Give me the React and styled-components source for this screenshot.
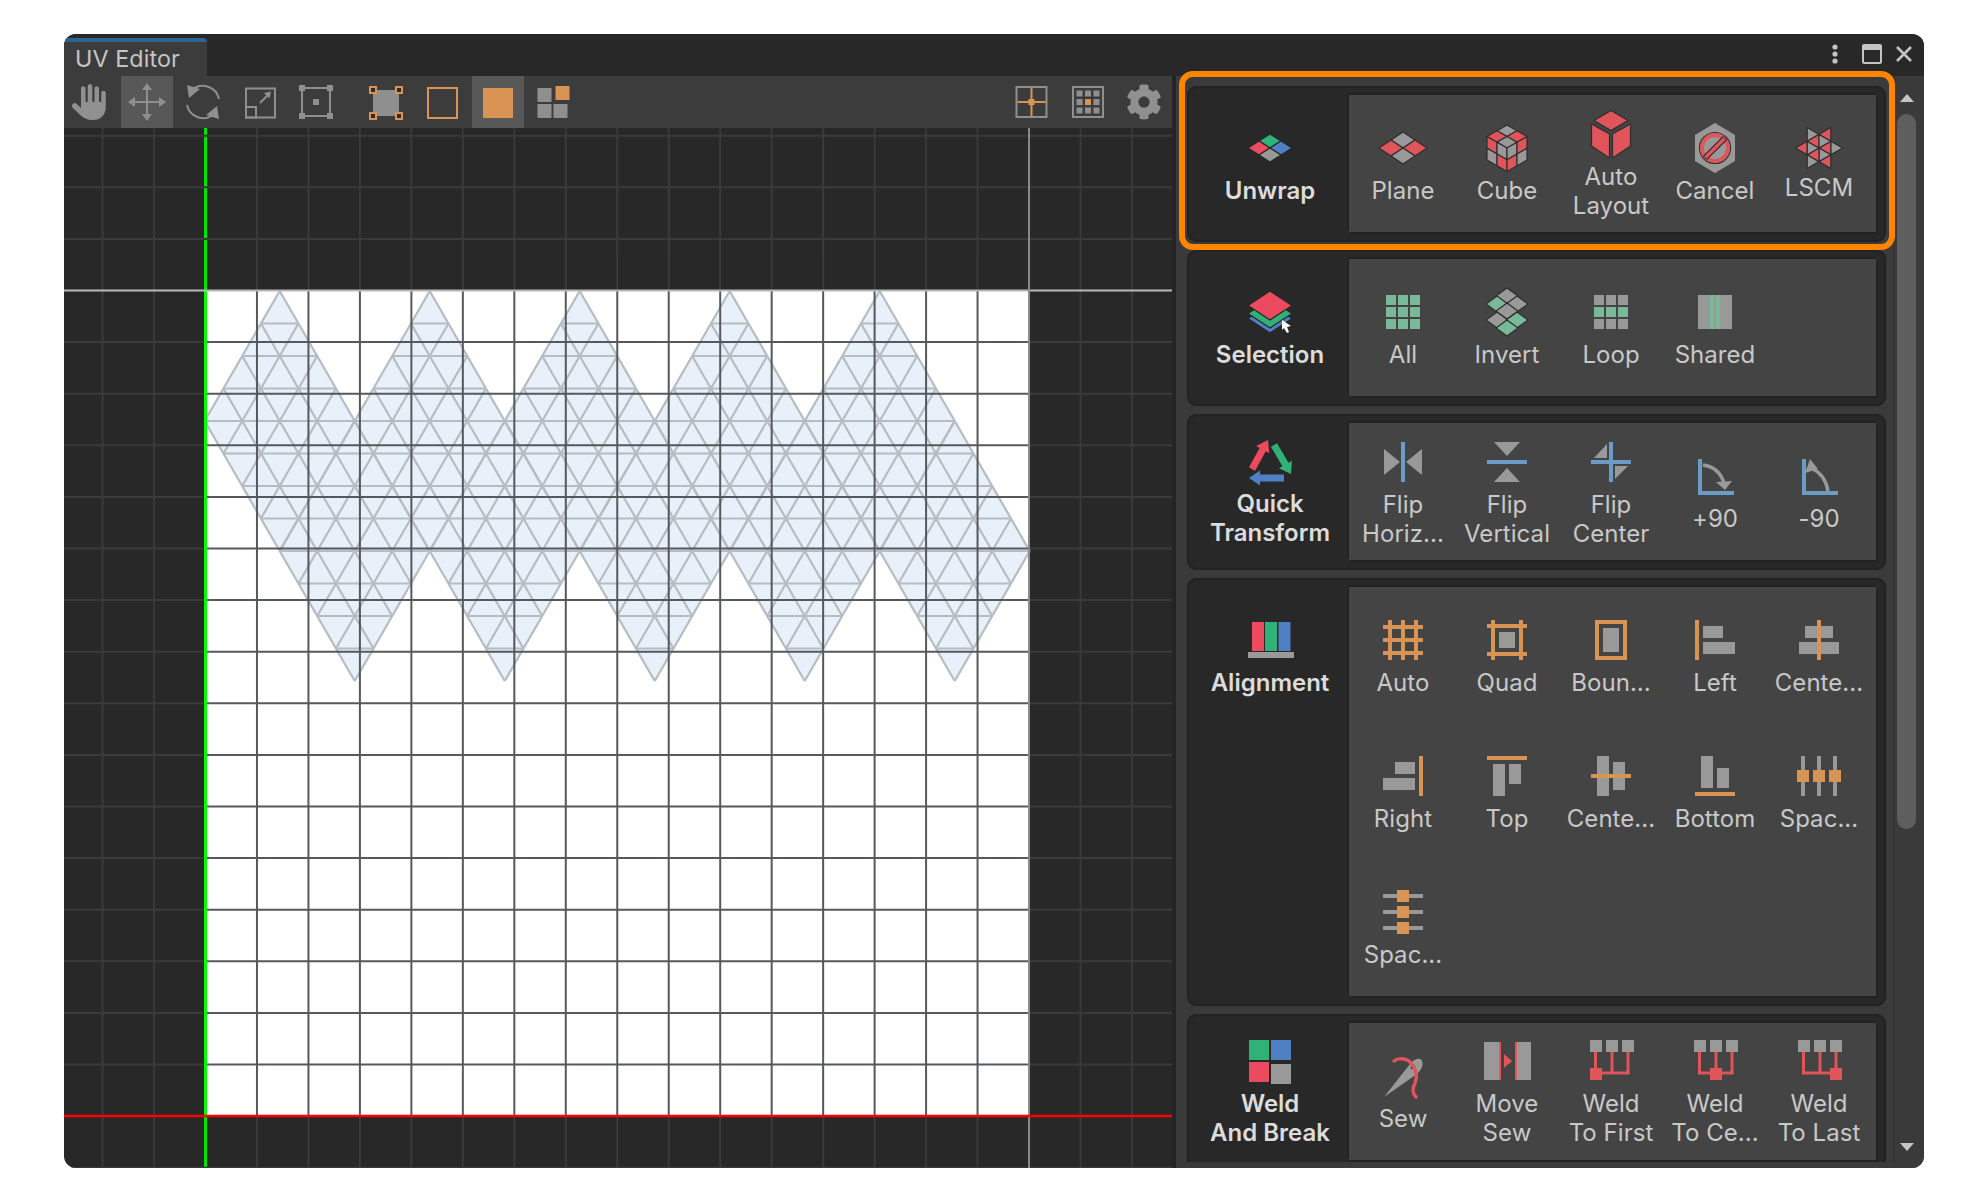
import React from 'react';
import styled, { createGlobalStyle } from 'styled-components';
import { FaHand } from 'react-icons/fa6';
import { FaCog } from 'react-icons/fa';

const GlobalStyle = createGlobalStyle`
  html, body { margin: 0; padding: 0; background: #fff; }
  body { font-family: Inter, "Noto Sans", sans-serif; }
`;

const GRAY = '#999999';
const ORANGE = '#d99453';
const RED = '#e0555c';
const HRED = '#ec4a5e';
const GREEN = '#2fb178';
const BLUE = '#4f80c4';
const LGREEN = '#7ab89a';
const LBLUE = '#6c9bc8';
const DARK = '#2e2e2e';

/* ---------- drawing helpers ---------- */
const Rh = ({ x, y, w, h, c, s = DARK }) => (
  <polygon points={`${x},${y - h} ${x + w},${y} ${x},${y + h} ${x - w},${y}`} fill={c} stroke={s} strokeWidth="1.2" />
);
const R = ({ x, y, w, h, c }) => <rect x={x} y={y} width={w} height={h} fill={c} />;
const Arrow = ({ a, b, c, w = 7, hw = 15, hl = 11 }) => {
  const dx = b[0] - a[0];
  const dy = b[1] - a[1];
  const l = Math.hypot(dx, dy);
  const ux = dx / l;
  const uy = dy / l;
  const nx = -uy;
  const ny = ux;
  const m = [b[0] - ux * hl, b[1] - uy * hl];
  const p = [
    [a[0] + (nx * w) / 2, a[1] + (ny * w) / 2],
    [m[0] + (nx * w) / 2, m[1] + (ny * w) / 2],
    [m[0] + (nx * hw) / 2, m[1] + (ny * hw) / 2],
    b,
    [m[0] - (nx * hw) / 2, m[1] - (ny * hw) / 2],
    [m[0] - (nx * w) / 2, m[1] - (ny * w) / 2],
    [a[0] - (nx * w) / 2, a[1] - (ny * w) / 2],
  ];
  return <polygon points={p.map((q) => q.join(',')).join(' ')} fill={c} />;
};

const facePatch = (o, u, v, colors) => {
  const pt = (s, t) => [o[0] + u[0] * s + v[0] * t, o[1] + u[1] * s + v[1] * t];
  const cells = [[0, 0], [0.5, 0], [0, 0.5], [0.5, 0.5]];
  return cells.map(([s, t], i) => (
    <polygon
      key={i}
      points={[pt(s, t), pt(s + 0.5, t), pt(s + 0.5, t + 0.5), pt(s, t + 0.5)].map((q) => q.join(',')).join(' ')}
      fill={colors[i]}
      stroke={DARK}
      strokeWidth="1.2"
      strokeLinejoin="round"
    />
  ));
};

const hexagram = () => {
  const C = [24, 24];
  const out = [];
  const pol = (r, deg) => [24 + r * Math.cos((deg * Math.PI) / 180), 24 + r * Math.sin((deg * Math.PI) / 180)];
  const inner = 13.6;
  const outer = 23.6;
  for (let i = 0; i < 6; i += 1) {
    const a = i * 60;
    const t = [pol(inner, a - 30), pol(outer, a), pol(inner, a + 30)];
    out.push(<polygon key={`o${i}`} points={t.map((q) => q.join(',')).join(' ')} fill={i % 2 === 0 ? GRAY : RED} stroke={DARK} strokeWidth="1.2" />);
    const w = [C, pol(inner, a - 30), pol(inner, a + 30)];
    out.push(<polygon key={`i${i}`} points={w.map((q) => q.join(',')).join(' ')} fill={i % 2 === 0 ? RED : GRAY} stroke={DARK} strokeWidth="1.2" />);
  }
  return out;
};

const weld = (sq) => (
  <>
    <R x={3} y={3} w={12} h={12} c={GRAY} />
    <R x={19} y={3} w={12} h={12} c={GRAY} />
    <R x={35} y={3} w={12} h={12} c={GRAY} />
    <R x={7} y={15} w={3} h={22} c={RED} />
    <R x={23.5} y={15} w={3} h={22} c={RED} />
    <R x={39.5} y={15} w={3} h={22} c={RED} />
    <R x={7} y={34.5} w={35.5} h={3} c={RED} />
    <R x={sq} y={31} w={12} h={12} c={RED} />
  </>
);

const ICONS = {
  unwrap: (
    <>
      <Rh x={24} y={17} w={11} h={7} c={GREEN} s="#282828" />
      <Rh x={13} y={24} w={11} h={7} c={HRED} s="#282828" />
      <Rh x={35} y={24} w={11} h={7} c={BLUE} s="#282828" />
      <Rh x={24} y={31} w={11} h={7} c={GRAY} s="#282828" />
    </>
  ),
  plane: (
    <>
      <Rh x={24} y={16} w={12} h={8} c={GRAY} />
      <Rh x={12} y={24} w={12} h={8} c={RED} />
      <Rh x={36} y={24} w={12} h={8} c={RED} />
      <Rh x={24} y={32} w={12} h={8} c={GRAY} />
    </>
  ),
  cube: (
    <>
      {facePatch([24, 1], [-20, 11.5], [20, 11.5], [GRAY, RED, RED, GRAY])}
      {facePatch([4, 12.5], [20, 11.5], [0, 23.5], [RED, GRAY, GRAY, RED])}
      {facePatch([24, 24], [20, -11.5], [0, 23.5], [GRAY, RED, RED, GRAY])}
    </>
  ),
  auto: (
    <>
      <polygon points="24,0.5 41,10.5 24,20.5 7,10.5" fill={RED} stroke={DARK} strokeWidth="1.2" />
      <polygon points="4.5,14 22.5,24 22.5,48 4.5,36" fill={RED} stroke={DARK} strokeWidth="1.2" />
      <polygon points="43.5,14 25.5,24 25.5,48 43.5,36" fill={RED} stroke={DARK} strokeWidth="1.2" />
    </>
  ),
  cancel: (
    <>
      <polygon points="24,-1 44,11 44,37 24,49 4,37 4,11" fill={GRAY} />
      <circle cx="24" cy="24" r="15.5" fill="none" stroke={DARK} strokeWidth="1.2" />
      <circle cx="24" cy="24" r="13" fill="none" stroke={RED} strokeWidth="4" />
      <line x1="14" y1="34" x2="34" y2="14" stroke={DARK} strokeWidth="6" />
      <line x1="14.5" y1="33.5" x2="33.5" y2="14.5" stroke={RED} strokeWidth="3.6" />
    </>
  ),
  lscm: hexagram(),
  selection: (
    <>
      <polygon points="24,16 46,30.5 24,45 2,30.5" fill={BLUE} stroke="#282828" strokeWidth="1.2" />
      <polygon points="24,11 46,25.5 24,40 2,25.5" fill={GREEN} stroke="#282828" strokeWidth="1.2" />
      <polygon points="24,3 46,17.5 24,32 2,17.5" fill={HRED} stroke="#282828" strokeWidth="1.2" />
      <polygon points="36,32 45,38 41,39 43,44 41,45 38,40 36,42" fill="#fff" />
    </>
  ),
  all: [0, 1, 2].flatMap((r) => [0, 1, 2].map((c) => <R key={`${r}${c}`} x={7 + c * 12} y={7 + r * 12} w={10} h={10} c={LGREEN} />)),
  loop: [0, 1, 2].flatMap((r) => [0, 1, 2].map((c) => <R key={`${r}${c}`} x={7 + c * 12} y={7 + r * 12} w={10} h={10} c={r === 1 ? LGREEN : GRAY} />)),
  invert: (
    <>
      <Rh x={24} y={25} w={11} h={8} c={LGREEN} />
      <Rh x={14} y={32} w={11} h={8} c={GRAY} />
      <Rh x={34} y={32} w={11} h={8} c={LGREEN} />
      <Rh x={24} y={40} w={11} h={8} c={LGREEN} />
      <Rh x={24} y={8} w={11} h={8} c={GRAY} />
      <Rh x={14} y={16} w={11} h={8} c={LGREEN} />
      <Rh x={34} y={16} w={11} h={8} c={GRAY} />
      <Rh x={24} y={23} w={11} h={8} c={GRAY} />
    </>
  ),
  shared: (
    <>
      <R x={7} y={7} w={34} h={34} c={GRAY} />
      <R x={19} y={7} w={4} h={34} c={LGREEN} />
      <R x={25} y={7} w={4} h={34} c={LGREEN} />
    </>
  ),
  quick: (
    <>
      <Arrow a={[6, 32]} b={[22, 3]} c={HRED} />
      <Arrow a={[28, 8]} b={[45, 37]} c={GREEN} />
      <Arrow a={[38, 41]} b={[3, 41]} c={BLUE} />
    </>
  ),
  flipH: (
    <>
      <polygon points="5,11 21,24 5,37" fill={GRAY} />
      <polygon points="43,11 27,24 43,37" fill={GRAY} />
      <R x={22} y={4} w={4} h={40} c={LBLUE} />
    </>
  ),
  flipV: (
    <>
      <polygon points="11,4 37,4 24,18" fill={GRAY} />
      <polygon points="11,44 37,44 24,30" fill={GRAY} />
      <R x={4} y={22} w={40} h={4} c={LBLUE} />
    </>
  ),
  flipC: (
    <>
      <polygon points="20,6 20,20 7,20" fill={GRAY} />
      <polygon points="28,28 41,28 28,41" fill={GRAY} />
      <R x={22} y={4} w={4} h={40} c={LBLUE} />
      <R x={4} y={22} w={40} h={4} c={LBLUE} />
    </>
  ),
  plus90: (
    <>
      <R x={7} y={7} w={4} h={36} c={LBLUE} />
      <R x={7} y={39} w={36} h={4} c={LBLUE} />
      <path d="M12 13 Q28 15 33 31" fill="none" stroke={GRAY} strokeWidth="3.5" />
      <polygon points="25,30 41,29 34,38" fill={GRAY} />
    </>
  ),
  minus90: (
    <>
      <R x={7} y={7} w={4} h={36} c={LBLUE} />
      <R x={7} y={39} w={36} h={4} c={LBLUE} />
      <path d="M33 39 Q30 22 16 16" fill="none" stroke={GRAY} strokeWidth="3.5" />
      <polygon points="15,7 10,21 23,17" fill={GRAY} />
    </>
  ),
  alignment: (
    <>
      <R x={6} y={6} w={12} h={29} c={HRED} />
      <R x={19} y={6} w={12} h={29} c={GREEN} />
      <R x={32.5} y={6} w={12} h={29} c={BLUE} />
      <R x={2} y={36} w={46} h={6} c={GRAY} />
    </>
  ),
  aAuto: (
    <>
      {[9, 22, 35].map((p) => <R key={`v${p}`} x={p} y={4} w={4} h={40} c={ORANGE} />)}
      {[9, 22, 35].map((p) => <R key={`h${p}`} x={4} y={p} w={40} h={4} c={ORANGE} />)}
    </>
  ),
  aQuad: (
    <>
      {[8, 36].map((p) => <R key={`v${p}`} x={p} y={4} w={4} h={40} c={ORANGE} />)}
      {[8, 36].map((p) => <R key={`h${p}`} x={4} y={p} w={40} h={4} c={ORANGE} />)}
      <R x={16} y={16} w={16} h={16} c={GRAY} />
    </>
  ),
  aBound: (
    <>
      <rect x="10" y="6" width="28" height="36" fill="none" stroke={ORANGE} strokeWidth="4" />
      <R x={16} y={12} w={16} h={24} c={GRAY} />
    </>
  ),
  aLeft: (
    <>
      <R x={4} y={4} w={4} h={40} c={ORANGE} />
      <R x={12} y={10} w={20} h={12} c={GRAY} />
      <R x={12} y={26} w={32} h={12} c={GRAY} />
    </>
  ),
  aCenterH: (
    <>
      <R x={10} y={10} w={28} h={12} c={GRAY} />
      <R x={4} y={26} w={40} h={12} c={GRAY} />
      <R x={22} y={4} w={4} h={40} c={ORANGE} />
    </>
  ),
  aRight: (
    <>
      <R x={40} y={4} w={4} h={40} c={ORANGE} />
      <R x={16} y={10} w={20} h={12} c={GRAY} />
      <R x={4} y={26} w={32} h={12} c={GRAY} />
    </>
  ),
  aTop: (
    <>
      <R x={4} y={4} w={40} h={4} c={ORANGE} />
      <R x={10} y={12} w={12} h={32} c={GRAY} />
      <R x={26} y={12} w={12} h={20} c={GRAY} />
    </>
  ),
  aCenterV: (
    <>
      <R x={10} y={4} w={12} h={40} c={GRAY} />
      <R x={26} y={10} w={12} h={28} c={GRAY} />
      <R x={4} y={22} w={40} h={4} c={ORANGE} />
    </>
  ),
  aBottom: (
    <>
      <R x={10} y={4} w={12} h={32} c={GRAY} />
      <R x={26} y={16} w={12} h={20} c={GRAY} />
      <R x={4} y={40} w={40} h={4} c={ORANGE} />
    </>
  ),
  aSpaceH: (
    <>
      {[6, 22, 38].map((p) => <R key={p} x={p} y={4} w={4} h={40} c={GRAY} />)}
      {[2, 18, 34].map((p) => <R key={p} x={p} y={18} w={12} h={12} c={ORANGE} />)}
    </>
  ),
  aSpaceV: (
    <>
      {[6, 22, 38].map((p) => <R key={p} x={4} y={p} w={40} h={4} c={GRAY} />)}
      {[2, 18, 34].map((p) => <R key={p} x={18} y={p} w={12} h={12} c={ORANGE} />)}
    </>
  ),
  weldGroup: (
    <>
      <R x={3} y={3} w={20} h={20} c={GREEN} />
      <R x={25} y={3} w={20} h={20} c={BLUE} />
      <R x={3} y={25} w={20} h={20} c={HRED} />
      <R x={25} y={27} w={20} h={20} c={GRAY} />
    </>
  ),
  sew: (
    <>
      <path d="M5 45 L31 12 C35 7 41 5 43 9 C45 13 42 18 38 22 Z" fill={GRAY} />
      <ellipse cx="34" cy="15" rx="2.6" ry="1.8" fill="#3a3a3a" transform="rotate(-40 34 15)" />
      <path d="M15 9 C20 5 30 6 34 14 C38 20 38 26 36 31 C33 37 34 42 37 45" fill="none" stroke={RED} strokeWidth="3.4" strokeLinecap="round" />
    </>
  ),
  moveSew: (
    <>
      <R x={1} y={5} w={15} h={38} c={GRAY} />
      <R x={16} y={5} w={2} h={38} c={RED} />
      <polygon points="21,17 29,24 21,31" fill={RED} />
      <R x={32} y={5} w={2} h={38} c={RED} />
      <R x={34} y={5} w={14} h={38} c={GRAY} />
    </>
  ),
  weldFirst: weld(3),
  weldCenter: weld(19),
  weldLast: weld(35),
};

/* ---------- toolbar icons ---------- */
const TG = '#8f8f8f';
const TOOL = {
  move: (
    <>
      <line x1="8" y1="26" x2="44" y2="26" stroke={TG} strokeWidth="2" />
      <line x1="26" y1="8" x2="26" y2="44" stroke={TG} strokeWidth="2" />
      <polygon points="26,7 21,14 31,14" fill={TG} />
      <polygon points="26,45 21,38 31,38" fill={TG} />
      <polygon points="7,26 14,21 14,31" fill={TG} />
      <polygon points="45,26 38,21 38,31" fill={TG} />
    </>
  ),
  rotate: (
    <>
      <path d="M42 23 A16.5 16.5 0 0 0 15 14" fill="none" stroke={TG} strokeWidth="2" />
      <path d="M10 29 A16.5 16.5 0 0 0 37 38" fill="none" stroke={TG} strokeWidth="2" />
      <polygon points="10,9 23,13 12,22" fill={TG} />
      <polygon points="42,43 29,39 40,30" fill={TG} />
    </>
  ),
  scale: (
    <>
      <rect x="12" y="12.5" width="29" height="29" fill="none" stroke={TG} strokeWidth="2" />
      <rect x="12" y="31" width="10" height="10.5" fill="none" stroke={TG} strokeWidth="2" />
      <line x1="26" y1="27" x2="35" y2="18" stroke={TG} strokeWidth="2" />
      <polygon points="37,15.5 30,17 35.5,22.5" fill={TG} />
    </>
  ),
  pivot: (
    <>
      <rect x="12" y="12" width="28" height="28" fill="none" stroke={TG} strokeWidth="2" />
      {[9, 37].flatMap((x) => [9, 37].map((y) => <R key={`${x}${y}`} x={x} y={y} w={6} h={6} c={TG} />))}
      <R x={23} y={23} w={6} h={6} c={TG} />
    </>
  ),
  face: (
    <>
      <R x={14} y={14} w={26} h={26} c={TG} />
      {[11, 37].flatMap((x) => [11, 37].map((y) => (
        <rect key={`${x}${y}`} x={x} y={y} width="6" height="6" fill="#2c2c2c" stroke={ORANGE} strokeWidth="2" />
      )))}
    </>
  ),
  edge: <rect x="12" y="12" width="29" height="30" fill="none" stroke={ORANGE} strokeWidth="2" />,
  fill: <R x={11} y={12} w={30} h={30} c={ORANGE} />,
  island: (
    <>
      <R x={8.5} y={12} w={14} h={14} c={TG} />
      <R x={8.5} y={28} w={14} h={14} c={TG} />
      <R x={24.5} y={28} w={14} h={14} c={TG} />
      <R x={26.5} y={10} w={14} h={14} c={ORANGE} />
    </>
  ),
  cross: (
    <>
      <rect x="11.5" y="11" width="30" height="30" fill="none" stroke={TG} strokeWidth="2" />
      <R x={12.5} y={25} w={28} h={2} c={ORANGE} />
      <R x={25.5} y={12} w={2} h={28} c={ORANGE} />
      <R x={23.5} y={23} w={6} h={6} c={ORANGE} />
    </>
  ),
  grid: (
    <>
      <rect x="11" y="11" width="30" height="30" fill="none" stroke={TG} strokeWidth="2" />
      {[14.5, 23, 31.5].flatMap((x) => [14.5, 23, 31.5].map((y) => (
        <R key={`${x}${y}`} x={x} y={y} w={6} h={6} c={x === 23 && y === 23 ? ORANGE : TG} />
      )))}
    </>
  ),
};

/* ---------- UV canvas ---------- */
const OX = 64;
const OY = 128;
const X0 = 205.5 - OX;
const Y0 = 290.5 - OY;
const CELLX = 51.47;
const CELLY = 51.6;
const CW = 1108;
const CH = 1040;

const triLines = (A, B, C, n, key) => {
  const lerp = (P, Q, t) => [P[0] + (Q[0] - P[0]) * t, P[1] + (Q[1] - P[1]) * t];
  const segs = [];
  [[A, B, C], [B, C, A], [C, A, B]].forEach(([P, Q, S]) => {
    for (let i = 0; i <= n; i += 1) {
      const t = i / n;
      segs.push([lerp(P, S, t), lerp(Q, S, t)]);
    }
  });
  return segs.map(([p, q], i) => <line key={`${key}-${i}`} x1={p[0]} y1={p[1]} x2={q[0]} y2={q[1]} />);
};

const meshFaces = () => {
  const faces = [];
  const H = 130;
  const S = 150;
  const x0 = 204.7 - OX;
  const y0 = 291 - OY;
  for (let i = 0; i < 5; i += 1) {
    const tl = [x0 + i * S, y0 + H];
    const tr = [x0 + (i + 1) * S, y0 + H];
    const apex = [x0 + i * S + 75, y0];
    const bl = [x0 + i * S + 75, y0 + 2 * H];
    const br = [x0 + (i + 1) * S + 75, y0 + 2 * H];
    const tip = [x0 + (i + 1) * S, y0 + 3 * H];
    faces.push([apex, tl, tr], [tl, tr, bl], [tr, bl, br], [bl, br, tip]);
  }
  return faces;
};

const UVCanvas = () => {
  const faces = meshFaces();
  const vs = [];
  const hs = [];
  for (let i = -2; i <= 18; i += 1) vs.push(X0 + i * CELLX);
  for (let j = -3; j <= 17; j += 1) hs.push(Y0 + j * CELLY);
  const XE = X0 + 16 * CELLX;
  const YE = Y0 + 16 * CELLY;
  const inX = (x) => x > X0 + 1 && x < XE - 1;
  const inY = (y) => y > Y0 + 1 && y < YE - 1;
  return (
    <CanvasSvg width={CW} height={CH} viewBox={`0 0 ${CW} ${CH}`}>
      <rect x={X0} y={Y0} width={XE - X0} height={YE - Y0} fill="#fff" />
      <g fill="#e8f0f9">
        {faces.map((f, i) => <polygon key={i} points={f.map((q) => q.join(',')).join(' ')} />)}
      </g>
      <g stroke="#b7bcc2" strokeWidth="2.2">
        {faces.map((f, i) => triLines(f[0], f[1], f[2], 4, i))}
      </g>
      <line x1={X0} y1="0" x2={X0} y2={CH} stroke="#00e600" strokeWidth="3" />
      <g stroke="#3a3a3a" strokeWidth="2">
        {vs.filter((x) => !inX(x) && x > 0 && x < CW && Math.abs(x - X0) > 1 && Math.abs(x - XE) > 1).map((x) => <line key={x} x1={x} y1="0" x2={x} y2={CH} />)}
        {vs.filter(inX).map((x) => <line key={x} x1={x} y1="0" x2={x} y2={Y0} />)}
        {vs.filter(inX).map((x) => <line key={`b${x}`} x1={x} y1={YE} x2={x} y2={CH} />)}
        {hs.filter((y) => !inY(y) && y > 0 && y < CH && Math.abs(y - Y0) > 1 && Math.abs(y - YE) > 1).map((y) => <line key={y} x1="0" y1={y} x2={CW} y2={y} />)}
        {hs.filter(inY).map((y) => <line key={`l${y}`} x1="0" y1={y} x2={X0 - 2} y2={y} />)}
        {hs.filter(inY).map((y) => <line key={`r${y}`} x1={XE + 1} y1={y} x2={CW} y2={y} />)}
      </g>
      <g stroke="#55585c" strokeWidth="2">
        {vs.filter(inX).map((x) => <line key={x} x1={x} y1={Y0} x2={x} y2={YE} />)}
        {hs.filter(inY).map((y) => <line key={y} x1={X0 + 1.5} y1={y} x2={XE} y2={y} />)}
      </g>
      <line x1={X0} y1={Y0} x2={X0} y2={YE} stroke="#00ff00" strokeWidth="3" />
      <line x1="0" y1={Y0} x2={CW} y2={Y0} stroke="#b8b8b8" strokeWidth="2" />
      <line x1={XE} y1="0" x2={XE} y2={CH} stroke="#8a8a8a" strokeWidth="2" />
      <line x1="0" y1={YE} x2={CW} y2={YE} stroke="#ff0000" strokeWidth="2.5" />
    </CanvasSvg>
  );
};

/* ---------- styled ---------- */
const Page = styled.div`
  padding: 34px 0 0 64px;
`;
const Win = styled.div`
  position: relative;
  width: 1860px;
  height: 1134px;
  background: #282828;
  border-radius: 12px;
  overflow: hidden;
  display: flex;
  flex-direction: column;
`;
const TabBar = styled.div`
  height: 42px;
  flex: none;
  display: flex;
  align-items: flex-end;
  background: #282828;
`;
const Tab = styled.div`
  width: 143px;
  height: 38px;
  box-sizing: border-box;
  padding-left: 11px;
  background: #3c3c3c;
  border-top: 4px solid #2b6596;
  border-radius: 4px 4px 0 0;
  color: #c4c4c4;
  font-size: 23.3px;
  line-height: 34px;
  letter-spacing: 0.1px;
`;
const Controls = styled.div`
  margin-left: auto;
  align-self: flex-start;
  margin-top: 10px;
  margin-right: 11.5px;
  display: flex;
  align-items: center;
  gap: 13px;
`;
const Control = styled.svg`
  display: block;
  flex: none;
  margin-right: ${(p) => p.$after || 0}px;
`;
const Main = styled.div`
  position: relative;
  flex: 1;
  min-height: 0;
  display: flex;
`;
const LeftPane = styled.div`
  width: 1108px;
  flex: none;
  display: flex;
  flex-direction: column;
  border-right: 4px solid #242424;
`;
const Toolbar = styled.div`
  height: 52px;
  flex: none;
  display: flex;
  background: #3c3c3c;
  padding-right: 2px;
`;
const ToolGroup = styled.div`
  display: flex;
  gap: 4.5px;
  margin-left: ${(p) => p.$ml || 0};
`;
const ToolBtn = styled.div`
  width: 52px;
  height: 52px;
  display: flex;
  align-items: center;
  justify-content: center;
  background: ${(p) => (p.$active ? '#585858' : 'transparent')};
  color: #909090;
`;
const ToolSvg = styled.svg`
  display: block;
`;
const CanvasSvg = styled.svg`
  display: block;
  flex: none;
`;
const RightPane = styled.div`
  flex: 1;
  min-width: 0;
  display: flex;
  background: #3a3a3a;
  padding-bottom: 6px;
`;
const Stack = styled.div`
  width: 717px;
  flex: none;
  box-sizing: border-box;
  padding: 10px 7px 0 11px;
  overflow: hidden;
  display: flex;
  flex-direction: column;
  gap: 8px;
`;
const Section = styled.section`
  flex: none;
  display: flex;
  box-sizing: border-box;
  background: #282828;
  border: 2px solid #222222;
  border-radius: 9px;
  padding: 7px 8px 8px 0;
`;
const GroupLabel = styled.div`
  width: 160px;
  flex: none;
  height: 136px;
  padding-left: 2px;
  box-sizing: border-box;
  display: flex;
  flex-direction: column;
  align-items: center;
  justify-content: center;
`;
const Content = styled.div`
  flex: 1;
  background: #444444;
  box-shadow: -2px -2px 0 #222222, 2px 2px 0 #222222;
  padding-left: 2px;
  display: grid;
  grid-template-columns: repeat(5, 104px);
  grid-auto-rows: ${(p) => p.$rows || 137}px;
`;
const Item = styled.div`
  display: flex;
  flex-direction: column;
  align-items: center;
  justify-content: center;
`;
const Glyph = styled.svg`
  display: block;
  flex: none;
  overflow: visible;
  margin-bottom: 4px;
`;
const ItemText = styled.div`
  font-size: 24px;
  line-height: 29px;
  color: #c8c8c8;
  text-align: center;
  letter-spacing: 0.05px;
  white-space: pre-line;
  margin-bottom: ${(p) => (p.$tight ? 1 : -2)}px;
  margin-top: ${(p) => (p.$tight ? -3 : 0)}px;
`;
const LabelText = styled(ItemText)`
  font-weight: 600;
  color: #dcdcdc;
  letter-spacing: 0;
`;
const Gutter = styled.div`
  flex: 1;
  min-width: 0;
  box-sizing: border-box;
  border-left: 2px solid #343434;
  padding: 18px 0 11px 2px;
  display: flex;
  flex-direction: column;
`;
const ScrollArrow = styled.div`
  width: 0;
  height: 0;
  align-self: flex-start;
  margin-left: 3px;
  border-left: 7px solid transparent;
  border-right: 7px solid transparent;
  ${(p) => (p.$down ? 'border-top: 8px solid #c4c4c4; margin-top: auto;' : 'border-bottom: 8px solid #c4c4c4;')}
`;
const Thumb = styled.div`
  width: 19px;
  height: 715px;
  margin-top: 12px;
  border-radius: 10px;
  background: #5e5e5e;
`;
const Highlight = styled.div`
  position: absolute;
  left: 1115px;
  top: -5px;
  width: 716px;
  height: 179px;
  box-sizing: border-box;
  border: 6.5px solid #ff8400;
  border-radius: 14px;
  pointer-events: none;
`;

/* ---------- data ---------- */
const SECTIONS = [
  {
    title: 'Unwrap',
    icon: 'unwrap',
    items: [
      ['plane', 'Plane'],
      ['cube', 'Cube'],
      ['auto', 'Auto\nLayout'],
      ['cancel', 'Cancel'],
      ['lscm', 'LSCM', true],
    ],
  },
  {
    title: 'Selection',
    icon: 'selection',
    items: [
      ['all', 'All'],
      ['invert', 'Invert'],
      ['loop', 'Loop'],
      ['shared', 'Shared'],
    ],
  },
  {
    title: 'Quick\nTransform',
    icon: 'quick',
    items: [
      ['flipH', 'Flip\nHoriz...'],
      ['flipV', 'Flip\nVertical'],
      ['flipC', 'Flip\nCenter'],
      ['plus90', '+90'],
      ['minus90', '-90'],
    ],
  },
  {
    title: 'Alignment',
    icon: 'alignment',
    rows: 136.33,
    items: [
      ['aAuto', 'Auto'],
      ['aQuad', 'Quad'],
      ['aBound', 'Boun...'],
      ['aLeft', 'Left'],
      ['aCenterH', 'Cente...'],
      ['aRight', 'Right'],
      ['aTop', 'Top'],
      ['aCenterV', 'Cente...'],
      ['aBottom', 'Bottom'],
      ['aSpaceH', 'Spac...'],
      ['aSpaceV', 'Spac...'],
    ],
  },
  {
    title: 'Weld\nAnd Break',
    icon: 'weldGroup',
    items: [
      ['sew', 'Sew'],
      ['moveSew', 'Move\nSew'],
      ['weldFirst', 'Weld\nTo First'],
      ['weldCenter', 'Weld\nTo Ce...'],
      ['weldLast', 'Weld\nTo Last'],
    ],
  },
];

const Icon48 = ({ name }) => (
  <Glyph width="48" height="48" viewBox="0 0 48 48">{ICONS[name]}</Glyph>
);
const Tool = ({ name, active }) => (
  <ToolBtn $active={active}>
    <ToolSvg width="52" height="52" viewBox="0 0 52 52">{TOOL[name]}</ToolSvg>
  </ToolBtn>
);

export default function App() {
  return (
    <Page>
      <GlobalStyle />
      <Win>
        <TabBar>
          <Tab>UV Editor</Tab>
          <Controls>
            <Control width="8" height="20" viewBox="0 0 8 20" $after={10}>
              <circle cx="4" cy="3" r="2.6" fill="#c4c4c4" />
              <circle cx="4" cy="10" r="2.6" fill="#c4c4c4" />
              <circle cx="4" cy="17" r="2.6" fill="#c4c4c4" />
            </Control>
            <Control width="20" height="20" viewBox="0 0 20 20">
              <rect x="1" y="1" width="18" height="18" rx="1" fill="none" stroke="#c4c4c4" strokeWidth="2" />
              <rect x="1" y="1" width="18" height="5" fill="#c4c4c4" />
            </Control>
            <Control width="18" height="18" viewBox="0 0 18 18">
              <path d="M2 2 L16 16 M16 2 L2 16" stroke="#c4c4c4" strokeWidth="2.6" fill="none" />
            </Control>
          </Controls>
        </TabBar>
        <Main>
          <LeftPane>
            <Toolbar>
              <ToolGroup>
                <ToolBtn><FaHand size={36} /></ToolBtn>
                <Tool name="move" active />
                <Tool name="rotate" />
                <Tool name="scale" />
                <Tool name="pivot" />
              </ToolGroup>
              <ToolGroup $ml="17px">
                <Tool name="face" />
                <Tool name="edge" />
                <Tool name="fill" active />
                <Tool name="island" />
              </ToolGroup>
              <ToolGroup $ml="auto">
                <Tool name="cross" />
                <Tool name="grid" />
                <ToolBtn><FaCog size={36} /></ToolBtn>
              </ToolGroup>
            </Toolbar>
            <UVCanvas />
          </LeftPane>
          <RightPane>
            <Stack>
              {SECTIONS.map((s) => (
                <Section key={s.title}>
                  <GroupLabel>
                    <Icon48 name={s.icon} />
                    <LabelText>{s.title}</LabelText>
                  </GroupLabel>
                  <Content $rows={s.rows}>
                    {s.items.map(([icon, text, tight], i) => (
                      <Item key={i}>
                        <Icon48 name={icon} />
                        <ItemText $tight={tight}>{text}</ItemText>
                      </Item>
                    ))}
                  </Content>
                </Section>
              ))}
            </Stack>
            <Gutter>
              <ScrollArrow />
              <Thumb />
              <ScrollArrow $down />
            </Gutter>
          </RightPane>
          <Highlight />
        </Main>
      </Win>
    </Page>
  );
}
